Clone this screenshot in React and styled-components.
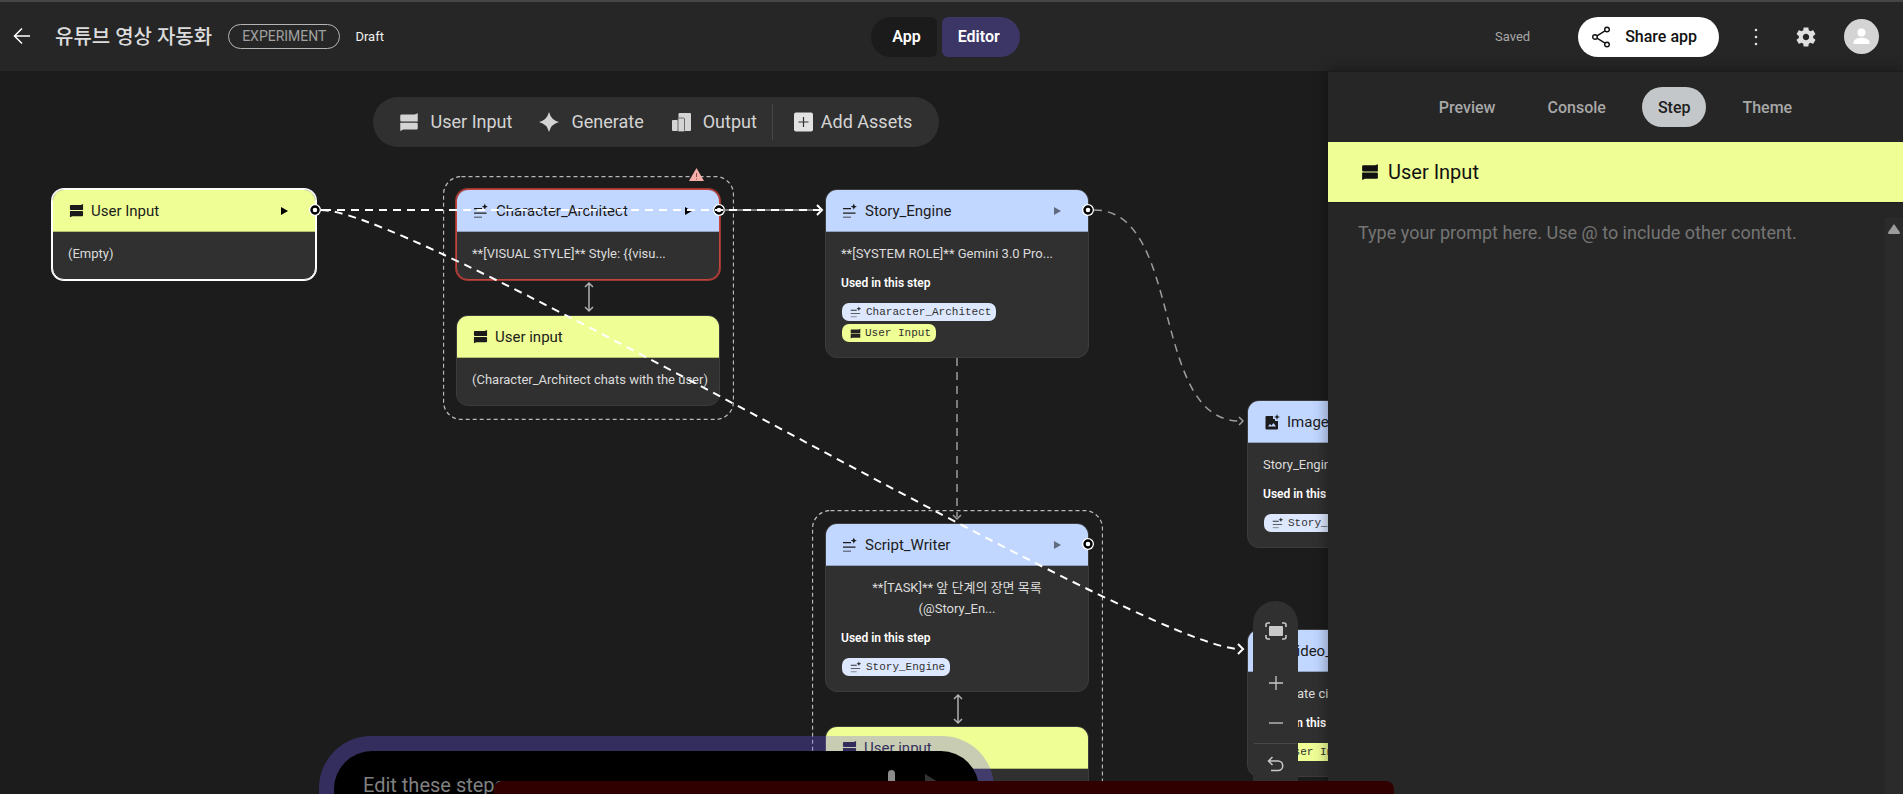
import React from 'react'
import styled, {createGlobalStyle, css} from 'styled-components'

const GlobalStyle = createGlobalStyle`
    * {
        box-sizing: border-box;
    }

    body {
        margin: 0;
        background: #1c1c1c;
        color: #dcdcdc;
        font-family: Roboto, 'Noto Sans CJK KR', sans-serif;
        font-size: 13px;
        overflow: hidden;
    }

    button {
        font: inherit;
        color: inherit;
        border: 0;
        padding: 0;
        background: none;
        cursor: pointer;
    }

    svg {
        display: block;
        flex: none;
    }
`

const YELLOW = '#effe95'
const BLUE = '#c2d7ff'

const Page = styled.div`
    height: 100vh;
    display: flex;
    flex-direction: column;
    position: relative;
    overflow: hidden;
`

const Header = styled.header`
    flex: none;
    height: 71px;
    display: grid;
    grid-template-columns: minmax(0, 1fr) auto minmax(0, 1fr);
    align-items: center;
    padding: 0 24px 0 12px;
    border-top: 2px solid #464646;
    background: #262626;
`

const HeaderLeft = styled.div`
    display: flex;
    align-items: center;
`

const HeaderRight = styled.div`
    display: flex;
    align-items: center;
    justify-content: flex-end;
`

const IconButton = styled.button`
    display: flex;
    align-items: center;
    justify-content: center;
    width: ${({$width}) => $width || 20}px;
    height: ${({$height}) => $height || 40}px;
    color: ${({$color}) => $color || '#e0e0e0'};
`

const ProjectTitle = styled.h1`
    margin: 0 16px 0 23px;
    font-size: 20px;
    line-height: 28px;
    font-weight: 500;
    white-space: nowrap;
`

const Tag = styled.span`
    height: 25px;
    padding: 0 13px;
    border: 1px solid #b4b4b4;
    border-radius: 13px;
    color: #a0a0a0;
    font-size: 14px;
    line-height: 23px;
`

const DraftLabel = styled.span`
    margin-left: 15px;
    color: #f0f0f0;
    font-size: 13px;
`

const ModeSwitch = styled.div`
    display: flex;
    gap: 5px;
`

const ModeButton = styled.button`
    height: 40px;
    padding: ${({$side}) => ($side === 'left' ? '0 16px 0 21px' : '0 20px 0 16px')};
    border-radius: ${({$side}) => ($side === 'left' ? '20px 6px 6px 20px' : '6px 20px 20px 6px')};
    background: ${({$active}) => ($active ? '#3c3666' : '#1b1b1b')};
    color: #fff;
    font-size: 16px;
    font-weight: 600;
`

const SavedLabel = styled.span`
    margin-right: 48px;
    color: #a8a8a8;
    font-size: 13px;
`

const ShareButton = styled.button`
    display: flex;
    align-items: center;
    gap: 15px;
    height: 40px;
    padding: 0 22px 0 14px;
    margin-right: 7px;
    border-radius: 20px;
    background: #fff;
    color: #111;
    font-size: 16px;
    font-weight: 500;
`

const Avatar = styled.button`
    width: 35px;
    height: 35px;
    margin-left: 18px;
    border-radius: 50%;
    background: #d4d4d4;
    overflow: hidden;
`

const Workspace = styled.main`
    flex: 1;
    min-height: 0;
    display: flex;
`

const Canvas = styled.section`
    flex: 1;
    min-width: 0;
    position: relative;
    overflow: hidden;
`

const ToolbarDock = styled.div`
    display: flex;
    justify-content: center;
    padding-top: 26px;
    padding-right: 16px;
`

const Toolbar = styled.div`
    position: relative;
    z-index: 3;
    display: flex;
    align-items: center;
    height: 50px;
    padding: 0 27px 0 26px;
    border-radius: 25px;
    background: #303030;
`

const ToolButton = styled.button`
    display: flex;
    align-items: center;
    gap: ${({$gap}) => $gap || 12}px;
    margin-right: ${({$after}) => $after || 0}px;
    color: #d4d4d4;
    font-size: 18px;
    line-height: 24px;
    white-space: nowrap;
`

const ToolDivider = styled.span`
    width: 1px;
    height: 36px;
    margin-right: 21px;
    background: #484848;
`

/* nodes live on a free canvas, so their x / y are content */
const Placed = styled.div`
    position: absolute;
    left: ${({$x}) => $x}px;
    top: ${({$y}) => $y}px;
`

const NodeBox = styled.article`
    width: 264px;
    border: 1px solid #3c3c3c;
    border-radius: 12px;
    background: #303030;
    overflow: hidden;

    ${({$state}) =>
        $state === 'selected' &&
        css`
            border-color: #fff;
            box-shadow: 0 0 0 1px #fff;
        `}
    ${({$state}) =>
        $state === 'error' &&
        css`
            border-color: #c9433d;
            box-shadow: 0 0 0 1px #9c3833;
        `}
`

const NodeHeader = styled.header`
    display: flex;
    align-items: center;
    gap: 7px;
    height: 42px;
    padding: 0 26px 0 16px;
    border-bottom: 1px solid rgba(0, 0, 0, 0.25);
    background: ${({$kind}) => ($kind === 'input' ? YELLOW : BLUE)};
    color: #1b1b1b;
`

const NodeTitle = styled.h2`
    flex: 1;
    margin: 0;
    font-size: 15px;
    line-height: 20px;
    font-weight: 400;
    white-space: nowrap;
`

const NodeBody = styled.div`
    padding: 11px 15px 15px;
`

const NodeText = styled.p`
    margin: 0;
    min-height: 21px;
    font-size: 13px;
    line-height: 21px;
    text-align: ${({$center}) => ($center ? 'center' : 'left')};
    white-space: pre;
`

const UsedTitle = styled.h3`
    margin: 11px 0 12px;
    color: #fff;
    font-size: 12px;
    line-height: 16px;
    font-weight: 600;
`

const ChipList = styled.div`
    display: flex;
    flex-direction: column;
    align-items: flex-start;
    gap: 3px;
    padding-left: 1px;
`

const Chip = styled.span`
    display: flex;
    align-items: center;
    gap: 4px;
    height: 18px;
    padding: 0 5px 0 8px;
    border-radius: 7px;
    background: ${({$kind}) => ($kind === 'input' ? YELLOW : '#dde8ff')};
    color: #303030;
    font-family: 'Liberation Mono', monospace;
    font-size: 11px;
    white-space: nowrap;
`

const Wires = styled.svg`
    position: absolute;
    left: 0;
    top: 0;
    z-index: 1;
    pointer-events: none;
`

const ZoomControls = styled.div`
    position: absolute;
    right: 30px;
    top: 530px;
    z-index: 3;
    display: flex;
    flex-direction: column;
    align-items: center;
    width: 45px;
    height: 230px;
    padding-top: 10px;
    border-radius: 23px 23px 0 0;
    background: #303030;

    & > button:first-child {
        margin-bottom: 12px;
    }
`

const ZoomDivider = styled.span`
    width: 43px;
    height: 1px;
    background: #484848;
`

const PromptDock = styled.form`
    position: absolute;
    left: 319px;
    right: 334px;
    top: 665px;
    z-index: 2;
    height: 120px;
    padding: 15px;
    border-radius: 52px;
    background: rgba(106, 89, 245, 0.3);
`

const PromptBox = styled.div`
    display: flex;
    align-items: center;
    gap: 22px;
    height: 90px;
    padding: 0 35px 22px 29px;
    border-radius: 38px;
    background: #000;
`

const PromptInput = styled.input`
    flex: 1;
    min-width: 0;
    padding: 0;
    border: 0;
    background: none;
    outline: none;
    font: inherit;
    font-size: 20px;

    &::placeholder {
        color: #808080;
        opacity: 1;
    }
`

const NoticeBar = styled.div`
    position: absolute;
    left: 494px;
    right: 509px;
    bottom: 0;
    z-index: 5;
    height: 13px;
    border-radius: 8px 8px 0 0;
    background: #300000;
`

const SidePanel = styled.aside`
    position: relative;
    z-index: 4;
    flex: none;
    width: 575px;
    display: flex;
    flex-direction: column;
    border-top: 1px solid #1c1c1c;
    background: #262626;
    box-shadow: 0 0 14px rgba(0, 0, 0, 0.4);
`

const Tabs = styled.nav`
    display: flex;
    align-items: center;
    justify-content: center;
    gap: 20px;
    height: 70px;
`

const Tab = styled.button`
    height: 40px;
    padding: 0 16px;
    border-radius: 20px;
    background: ${({$active}) => ($active ? '#c4c7c9' : 'transparent')};
    color: ${({$active}) => ($active ? '#202020' : '#a8a8a8')};
    font-size: 16px;
    font-weight: 500;
`

const StepHeader = styled.div`
    display: flex;
    align-items: center;
    gap: 9px;
    height: 60px;
    padding-left: 33px;
    background: ${YELLOW};
    color: #111;
`

const StepTitle = styled.h2`
    margin: 0;
    font-size: 20px;
    line-height: 28px;
    font-weight: 400;
`

const StepEditor = styled.div`
    flex: 1;
    display: flex;
    border-top: 1px solid #1c1c1c;
`

const StepPrompt = styled.textarea`
    flex: 1;
    padding: 18px 0 0 30px;
    border: 0;
    outline: none;
    resize: none;
    background: none;
    color: #dcdcdc;
    font: inherit;
    font-size: 18px;
    line-height: 24px;

    &::placeholder {
        color: #757575;
        opacity: 1;
    }
`

const ScrollTrack = styled.div`
    width: 18px;
    margin-top: 15px;
    padding: 6px 3px;
    background: #2b2b2b;
`

const InputIcon = ({size = 16, color = 'currentColor'}) => (
    <svg width={size} height={size} viewBox="0 0 16 16" fill={color}>
        <path d="M1 3q0-1 1-1h10.500L15 1v6.500H2q-1 0-1-1z" />
        <path d="M1 8.500h13q1 0 1 1V13q0 1-1 1H3.500L1 15.200z" />
    </svg>
)

const GenerateTextIcon = ({size = 16}) => (
    <svg width={size} height={size} viewBox="0 0 16 16" fill="currentColor">
        <path d="M1 5h8v1.200H1zM1 9.500h12.500v1.200H1z" />
        <path d="M1 13.500h8v1.400H1z" opacity=".5" />
        <path d="M11.800.6l.9 2.200 2.200.9-2.200.9-.9 2.200-.9-2.200-2.200-.9 2.200-.9z" />
    </svg>
)

const ImageIcon = () => (
    <svg width="16" height="16" viewBox="0 0 16 16" fill="currentColor">
        <path
            fillRule="evenodd"
            d="M2.500 2H9v3h2v2h3v7.500a1 1 0 0 1-1 1H2.500a1 1 0 0 1-1-1V3a1 1 0 0 1 1-1zM4 12.500h8L9.500 9l-2 2.500L6 10z"
        />
        <path d="M13 0l.8 2.200 2.200.8-2.200.8L13 6l-.8-2.200L10 3l2.200-.8z" />
    </svg>
)

const PlayIcon = ({muted}) => (
    <svg width="8" height="10" viewBox="0 0 8 10">
        <path d="M0 1v8l7-4z" fill={muted ? '#616b80' : '#000'} />
    </svg>
)

const SparkIcon = () => (
    <svg width="20" height="20" viewBox="0 0 20 20" fill="currentColor">
        <path d="M10 0q2 8 10 10q-8 2-10 10q-2-8-10-10q8-2 10-10z" />
    </svg>
)

const OutputIcon = () => (
    <svg width="19" height="20" viewBox="0 0 19 20">
        <g fill="currentColor">
            <rect x="6.500" y="1" width="12.500" height="18" rx="1" />
            <rect y="8" width="6" height="11" rx="1" />
        </g>
        <rect x="6" y="6" width="6.500" height="13.500" rx="1" fill="currentColor" stroke="#6a6a6a" />
    </svg>
)

const AddIcon = () => (
    <svg width="19" height="20" viewBox="0 0 19 20">
        <rect y="0.500" width="19" height="19" rx="2" fill="#e2e2e2" />
        <path d="M9.500 5v10M4.500 10h10" stroke="#303030" strokeWidth="1.200" />
    </svg>
)

const ChipIcon = ({kind}) => (kind === 'input' ? <InputIcon size={11} color="#222" /> : <GenerateTextIcon size={12} />)

const Node = ({x, y, kind, title, icon, text, center, used, state, play}) => (
    <Placed $x={x} $y={y}>
        <NodeBox $state={state}>
            <NodeHeader $kind={kind}>
                {icon || (kind === 'input' ? <InputIcon size={15} /> : <GenerateTextIcon />)}
                <NodeTitle>{title}</NodeTitle>
                {play && (
                    <IconButton $width={8} $height={20} aria-label={`Run ${title}`}>
                        <PlayIcon muted={play === 'muted'} />
                    </IconButton>
                )}
            </NodeHeader>
            <NodeBody>
                <NodeText $center={center}>{text}</NodeText>
                {used && (
                    <>
                        <UsedTitle>Used in this step</UsedTitle>
                        <ChipList>
                            {used.map((item) => (
                                <Chip key={item.name} $kind={item.kind}>
                                    <ChipIcon kind={item.kind} />
                                    {item.name}
                                </Chip>
                            ))}
                        </ChipList>
                    </>
                )}
            </NodeBody>
        </NodeBox>
    </Placed>
)

const Group = ({x, y, h}) => (
    <Placed $x={x} $y={y}>
        <svg width="291" height={h}>
            <rect
                x="0.500"
                y="0.500"
                width="290"
                height={h - 1}
                rx="18"
                fill="none"
                stroke="#b8b8b8"
                strokeWidth="1.300"
                strokeDasharray="4 3"
            />
        </svg>
    </Placed>
)

const nodes = [
    {x: 52, y: 118, kind: 'input', title: 'User Input', text: '(Empty)', state: 'selected', play: 'on'},
    {
        x: 456,
        y: 118,
        kind: 'generate',
        title: 'Character_Architect',
        text: '**[VISUAL STYLE]** Style: {{visu...',
        state: 'error',
        play: 'on',
    },
    {x: 456, y: 244, kind: 'input', title: 'User input', text: '(Character_Architect chats with the user)'},
    {
        x: 825,
        y: 118,
        kind: 'generate',
        title: 'Story_Engine',
        text: '**[SYSTEM ROLE]** Gemini 3.0 Pro...',
        play: 'muted',
        used: [
            {kind: 'generate', name: 'Character_Architect'},
            {kind: 'input', name: 'User Input'},
        ],
    },
    {
        x: 825,
        y: 452,
        kind: 'generate',
        title: 'Script_Writer',
        text: '**[TASK]** 앞 단계의 장면 목록\n(@Story_En...',
        center: true,
        play: 'muted',
        used: [{kind: 'generate', name: 'Story_Engine'}],
    },
    {x: 825, y: 655, kind: 'input', title: 'User input', text: ''},
    {
        x: 1247,
        y: 329,
        kind: 'generate',
        icon: <ImageIcon />,
        title: 'Image_',
        text: 'Story_Engine',
        used: [{kind: 'generate', name: 'Story_Engine'}],
    },
    {
        x: 1247,
        y: 558,
        kind: 'generate',
        title: 'Video_',
        text: 'Generate cinematic',
        used: [{kind: 'input', name: 'User Input'}],
    },
]

const ports = [
    [315, 139],
    [719, 139],
    [1088, 139],
    [1088, 473],
]

const CanvasWires = () => (
    <Wires width="1328" height="723" fill="none">
        {ports.map(([cx, cy]) => (
            <g key={`${cx}-${cy}`}>
                <circle cx={cx} cy={cy} r="6" fill="#fff" />
                <circle cx={cx} cy={cy} r="3.500" stroke="#000" strokeWidth="2.400" />
            </g>
        ))}
        <g stroke="#9c9c9c" strokeWidth="1.500">
            <path d="M1094 139C1184 139 1150 350 1240 350" strokeDasharray="8 6" />
            <path d="M1239 346l4 4-4 4" />
            <path d="M957 287V446" strokeDasharray="8 6" />
            <path d="M953 444l4 4 4-4" />
            <path d="M722 139H820" strokeDasharray="8 6" />
        </g>
        <g stroke="#b0b0b0" strokeWidth="1.500">
            <path d="M589 212V240M585 216l4-4 4 4M585 236l4 4 4-4" />
            <path d="M958 624V652M954 628l4-4 4 4M954 648l4 4 4-4" />
        </g>
        <g stroke="#fff" strokeWidth="2">
            <path d="M323 139H820" strokeDasharray="8 6" />
            <path d="M817 134l5 5-5 5" />
            <path d="M321 139C421 139 1144 578 1240 578" strokeDasharray="8 6" />
            <path d="M1238 573l5 5-5 5" />
        </g>
        <path d="M696.500 97l7.500 13h-15z" fill="#f6aea9" />
        <path d="M696.500 102v4M696.500 107.500v1" stroke="#8a4a46" />
    </Wires>
)

const App = () => (
    <Page>
        <GlobalStyle />
        <Header>
            <HeaderLeft>
                <IconButton aria-label="Back" $color="#fff">
                    <svg width="18" height="18" viewBox="0 0 18 18" fill="none" stroke="currentColor" strokeWidth="1.500">
                        <path d="M17 8H2M9 .5L1.500 8L9 15.500" />
                    </svg>
                </IconButton>
                <ProjectTitle>유튜브 영상 자동화</ProjectTitle>
                <Tag>EXPERIMENT</Tag>
                <DraftLabel>Draft</DraftLabel>
            </HeaderLeft>
            <ModeSwitch>
                <ModeButton $side="left">App</ModeButton>
                <ModeButton $side="right" $active>
                    Editor
                </ModeButton>
            </ModeSwitch>
            <HeaderRight>
                <SavedLabel>Saved</SavedLabel>
                <ShareButton>
                    <svg width="18" height="22" viewBox="0 0 18 22" fill="none" stroke="currentColor" strokeWidth="1.400">
                        <circle cx="15" cy="3.500" r="2.300" />
                        <circle cx="3" cy="11" r="2.300" />
                        <circle cx="15" cy="18.500" r="2.300" />
                        <path d="M5 9.800L13 4.800M5 12.200L13 17.200" />
                    </svg>
                    Share app
                </ShareButton>
                <IconButton aria-label="More" $width={60}>
                    <svg width="4" height="18" viewBox="0 0 4 18" fill="currentColor">
                        <circle cx="2" cy="2" r="1.300" />
                        <circle cx="2" cy="9" r="1.300" />
                        <circle cx="2" cy="16" r="1.300" />
                    </svg>
                </IconButton>
                <IconButton aria-label="Settings" $width={40}>
                    <svg width="24" height="24" viewBox="0 0 24 24" fill="currentColor">
                        <path d="M19.140 12.940c.04-.3.06-.61.06-.94 0-.32-.02-.64-.07-.94l2.030-1.580c.18-.14.23-.41.12-.61l-1.920-3.320c-.12-.22-.37-.29-.59-.22l-2.390.96c-.5-.38-1.030-.7-1.620-.94l-.36-2.540c-.04-.24-.24-.41-.48-.41h-3.840c-.24 0-.43.17-.47.41l-.36 2.540c-.59.24-1.130.57-1.620.94l-2.390-.96c-.22-.08-.47 0-.59.22L2.740 8.870c-.12.21-.08.47.12.61l2.030 1.580c-.05.3-.09.63-.09.94s.02.64.07.94l-2.030 1.580c-.18.14-.23.41-.12.61l1.920 3.320c.12.22.37.29.59.22l2.390-.96c.5.38 1.030.7 1.620.94l.36 2.540c.05.24.24.41.48.41h3.840c.24 0 .44-.17.47-.41l.36-2.540c.59-.24 1.130-.56 1.620-.94l2.390.96c.22.08.47 0 .59-.22l1.920-3.320c.12-.22.07-.47-.12-.61l-2.010-1.580zM12 15.200c-1.760 0-3.200-1.440-3.200-3.200s1.440-3.200 3.200-3.200 3.200 1.440 3.200 3.200-1.440 3.200-3.200 3.200z" />
                    </svg>
                </IconButton>
                <Avatar aria-label="Account">
                    <svg width="35" height="35" viewBox="0 0 35 35" fill="#fff">
                        <circle cx="17.500" cy="13.500" r="4" />
                        <path d="M9.500 25v-2c0-2.800 5.300-4.200 8-4.200s8 1.400 8 4.200v2z" />
                    </svg>
                </Avatar>
            </HeaderRight>
        </Header>
        <Workspace>
            <Canvas>
                <ToolbarDock>
                    <Toolbar>
                        <ToolButton $after={27}>
                            <InputIcon size={20} />
                            User Input
                        </ToolButton>
                        <ToolButton $after={28}>
                            <SparkIcon />
                            Generate
                        </ToolButton>
                        <ToolButton $after={15}>
                            <OutputIcon />
                            Output
                        </ToolButton>
                        <ToolDivider />
                        <ToolButton $gap={8}>
                            <AddIcon />
                            Add Assets
                        </ToolButton>
                    </Toolbar>
                </ToolbarDock>
                <Group x={443} y={105} h={244} />
                <Group x={812} y={439} h={300} />
                {nodes.map((node) => (
                    <Node key={`${node.x}-${node.y}`} {...node} />
                ))}
                <CanvasWires />
                <ZoomControls>
                    <IconButton aria-label="Fit to screen" $width={45}>
                        <svg width="22" height="18" viewBox="0 0 22 18" fill="none" stroke="#c8c8c8" strokeWidth="1.600">
                            <rect x="4" y="4" width="14" height="10" rx="1" fill="#c8c8c8" stroke="none" />
                            <path d="M1 5V3a2 2 0 0 1 2-2h2M17 1h2a2 2 0 0 1 2 2v2M21 13v2a2 2 0 0 1-2 2h-2M5 17H3a2 2 0 0 1-2-2v-2" />
                        </svg>
                    </IconButton>
                    <IconButton aria-label="Zoom in" $width={45}>
                        <svg width="14" height="14" viewBox="0 0 14 14" stroke="#c8c8c8" strokeWidth="1.300">
                            <path d="M7 0v14M0 7h14" />
                        </svg>
                    </IconButton>
                    <IconButton aria-label="Zoom out" $width={45}>
                        <svg width="14" height="14" viewBox="0 0 14 14" stroke="#c8c8c8" strokeWidth="1.300">
                            <path d="M0 7h14" />
                        </svg>
                    </IconButton>
                    <ZoomDivider />
                    <IconButton aria-label="Undo" $width={45}>
                        <svg width="18" height="16" viewBox="0 0 18 16" fill="none" stroke="#c8c8c8" strokeWidth="1.500">
                            <path d="M5.500 1L1.500 5l4 4M1.500 5H11a4.500 4.500 0 0 1 0 9.500H4" />
                        </svg>
                    </IconButton>
                </ZoomControls>
                <PromptDock>
                    <PromptBox>
                        <PromptInput aria-label="Edit these steps" placeholder="Edit these steps" />
                        <IconButton type="button" aria-label="Dictate">
                            <svg width="14" height="32" viewBox="0 0 14 32">
                                <rect x="3" y="1" width="7" height="22" rx="3.500" fill="#8c8c8c" />
                            </svg>
                        </IconButton>
                        <IconButton aria-label="Send">
                            <svg width="20" height="24" viewBox="0 0 20 24" fill="#333">
                                <path d="M1 1l18 11-18 11z" />
                            </svg>
                        </IconButton>
                    </PromptBox>
                </PromptDock>
            </Canvas>
            <SidePanel>
                <Tabs>
                    <Tab>Preview</Tab>
                    <Tab>Console</Tab>
                    <Tab $active>Step</Tab>
                    <Tab>Theme</Tab>
                </Tabs>
                <StepHeader>
                    <InputIcon size={18} />
                    <StepTitle>User Input</StepTitle>
                </StepHeader>
                <StepEditor>
                    <StepPrompt
                        aria-label="Step prompt"
                        placeholder="Type your prompt here. Use @ to include other content."
                    />
                    <ScrollTrack>
                        <svg width="12" height="10" viewBox="0 0 12 10" fill="#9c9c9c">
                            <path d="M6 0l6 8.500q0 1.500-1 1.500H1q-1 0-1-1.500z" />
                        </svg>
                    </ScrollTrack>
                </StepEditor>
            </SidePanel>
        </Workspace>
        <NoticeBar />
    </Page>
)

export default App
